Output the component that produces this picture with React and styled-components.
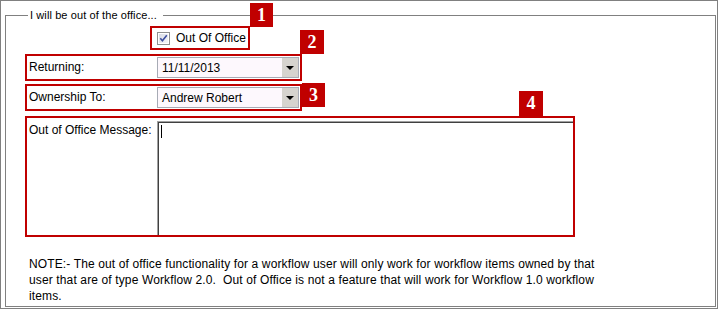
import React from "react";
import styled, { createGlobalStyle } from "styled-components";

const GlobalStyle = createGlobalStyle`
  body {
    margin: 0;
    background: #fff;
    font-family: "Liberation Sans", Arial, sans-serif;
    font-size: 12px;
    color: #000;
  }
`;

const Frame = styled.div`
  width: 718px;
  height: 309px;
  box-sizing: border-box;
  border: 1px solid #808080;
  display: flex;
`;

const Group = styled.fieldset`
  flex: 1;
  margin: 6px 1px 1px 4px;
  padding: 3px 0 0 19px;
  border: 1px solid #808080;
  min-width: 0;
  display: flex;
  flex-direction: column;
  align-items: flex-start;
`;

const Legend = styled.legend`
  margin-left: 3px;
  padding: 0 6px 0 2px;
  line-height: 16px;
  font-size: 11px;
  letter-spacing: 0.1px;
`;

const Marked = styled.div`
  position: relative;
  box-sizing: border-box;
  border: 2px solid #c00000;
`;

const CheckBox = styled(Marked)`
  margin-left: 125px;
  width: 100px;
  height: 24px;
  display: flex;
  align-items: center;
  gap: 6px;
  padding: 0 0 0 5px;
`;

const FieldRow = styled(Marked)`
  width: 277px;
  height: ${(p) => p.$height || 27}px;
  margin-top: ${(p) => p.$gap || 0}px;
  display: grid;
  grid-template-columns: 128px 142px;
  padding: 1px 1px 1px 2px;
`;

const MessageRow = styled(Marked)`
  width: 550px;
  height: 121px;
  margin-top: 5px;
  display: grid;
  grid-template-columns: 128px 1fr;
  padding: 3px 0 0 2px;
`;

const Label = styled.div`
  line-height: 16px;
  padding-top: ${(p) => p.$top || 2}px;
  white-space: nowrap;
`;

const Badge = styled.div`
  position: absolute;
  top: ${(p) => p.$top}px;
  right: ${(p) => p.$right}px;
  width: ${(p) => p.$w || 24}px;
  height: ${(p) => p.$h || 24}px;
  background: #c00000;
  color: #fff;
  font-family: "Liberation Serif", "Times New Roman", serif;
  font-weight: bold;
  font-size: 18px;
  display: flex;
  align-items: center;
  justify-content: center;
`;

const Select = styled.div`
  height: 21px;
  box-sizing: border-box;
  border: 1px solid #a7abb5;
  background: #fdf8fd;
  display: flex;
  align-items: stretch;
`;

const SelectValue = styled.div`
  flex: 1;
  padding-left: 4px;
  line-height: 19px;
  padding-top: 1px;
`;

const SelectButton = styled.div`
  width: 16px;
  background: #d6d3ce;
  display: flex;
  align-items: center;
  justify-content: center;
`;

const Arrow = styled.div`
  width: 0;
  height: 0;
  border-left: 4px solid transparent;
  border-right: 4px solid transparent;
  border-top: 4px solid #000;
  margin-top: 1px;
`;

const MessageArea = styled.div`
  border-top: 1px solid #a0a0a0;
  border-left: 1px solid #a0a0a0;
  box-shadow: inset 1px 1px 0 #404040;
  background: #fff;
  position: relative;
`;

const Caret = styled.span`
  position: absolute;
  left: 3px;
  top: 3px;
  width: 1px;
  height: 13px;
  background: #000;
`;

const Note = styled.p`
  margin: 19px 0 0 4px;
  line-height: 16px;
  letter-spacing: 0.13px;
  white-space: nowrap;
`;

const Dropdown = ({ value }) => (
  <Select>
    <SelectValue>{value}</SelectValue>
    <SelectButton>
      <Arrow />
    </SelectButton>
  </Select>
);

const CheckIcon = () => (
  <svg width="13" height="13" viewBox="0 0 13 13">
    <defs>
      <linearGradient id="cb" x1="0" y1="0" x2="1" y2="1">
        <stop offset="0" stopColor="#d9dce6" />
        <stop offset="1" stopColor="#f6f6f8" />
      </linearGradient>
    </defs>
    <rect x="0.5" y="0.5" width="12" height="12" fill="#fff" stroke="#8e8f8f" />
    <rect x="2" y="2" width="9" height="9" fill="url(#cb)" />
    <path d="M3.3 6.3 L5.4 8.8 L9.8 3.2" fill="none" stroke="#3c4e9f" strokeWidth="1.6" />
  </svg>
);

const App = () => {
  return (
    <>
      <GlobalStyle />
      <Frame>
        <Group>
          <Legend>I will be out of the office...</Legend>

          <CheckBox>
            <CheckIcon />
            <span>Out Of Office</span>
            <Badge $top={-25} $right={-25} $w={23}>1</Badge>
          </CheckBox>

          <FieldRow $gap={4}>
            <Label>Returning:</Label>
            <Dropdown value="11/11/2013" />
            <Badge $top={-26} $right={-24}>2</Badge>
          </FieldRow>

          <FieldRow $gap={3}>
            <Label>Ownership To:</Label>
            <Dropdown value="Andrew Robert" />
            <Badge $top={-3} $right={-25} $w={23}>3</Badge>
          </FieldRow>

          <MessageRow>
            <Label $top={1}>Out of Office Message:</Label>
            <MessageArea>
              <Caret />
            </MessageArea>
            <Badge $top={-27} $right={30} $h={25}>4</Badge>
          </MessageRow>

          <Note>
            NOTE:- The out of office functionality for a workflow user will only work for workflow items owned by that
            <br />
            user that are of type Workflow 2.0.&nbsp; Out of Office is not a feature that will work for Workflow 1.0 workflow
            <br />
            items.
          </Note>
        </Group>
      </Frame>
    </>
  );
};

export default App;
